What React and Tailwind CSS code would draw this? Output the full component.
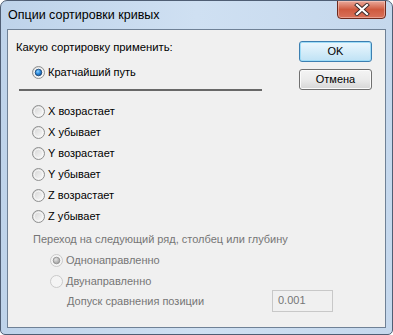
import React from "react";

const Radio = ({ checked, disabled }) => {
  const ring = disabled ? "#c9c9c9" : "#8e8f8f";
  return (
    <svg width="13" height="13" viewBox="0 0 13 13" className="shrink-0">
      <defs>
        <linearGradient id="rb" x1="0" y1="0" x2="1" y2="1">
          <stop offset="0" stopColor="#d0d0d0" />
          <stop offset="1" stopColor="#ffffff" />
        </linearGradient>
        <radialGradient id="dotBlue" cx="0.4" cy="0.35" r="0.7">
          <stop offset="0" stopColor="#8fd2ff" />
          <stop offset="0.5" stopColor="#2c8ce0" />
          <stop offset="1" stopColor="#1b4f8f" />
        </radialGradient>
        <radialGradient id="dotGray" cx="0.4" cy="0.35" r="0.7">
          <stop offset="0" stopColor="#e4e4e4" />
          <stop offset="1" stopColor="#9a9a9a" />
        </radialGradient>
      </defs>
      <circle cx="6.5" cy="6.5" r="6" fill={disabled ? "#f4f4f4" : "url(#rb)"} stroke={ring} strokeWidth="1" />
      {!disabled && <circle cx="6.5" cy="6.5" r="4.3" fill="none" stroke="#f8f8f8" strokeWidth="1" />}
      {checked && (
        <circle
          cx="6.5"
          cy="6.5"
          r="3.3"
          fill={disabled ? "url(#dotGray)" : "url(#dotBlue)"}
          stroke={disabled ? "#8c8c8c" : "#16416f"}
          strokeWidth="0.8"
        />
      )}
    </svg>
  );
};

const Option = ({ label, checked, disabled, className = "" }) => (
  <div className={`h-[21px] flex items-center gap-[3px] ${className}`}>
    <Radio checked={checked} disabled={disabled} />
    <span className={disabled ? "text-[#767676]" : "text-black"}>{label}</span>
  </div>
);

const sorts = ["X возрастает", "X убывает", "Y возрастает", "Y убывает", "Z возрастает", "Z убывает"];

export default function App() {
  return (
    <div
      className="w-[393px] h-[335px] flex flex-col border border-[#4f5e74] rounded-t-[7px] rounded-b-[5px] bg-gradient-to-r from-[#bed3ea] via-[#cfe0f2] to-[#c5d8ed] overflow-hidden"
      style={{ fontFamily: '"Liberation Sans", Arial, sans-serif' }}
    >
      <div className="h-[28px] flex items-start shrink-0">
        <div className="pl-[7px] pt-[7px] text-[12.5px] leading-[15px] text-black flex-1">Опции сортировки кривых</div>
        <div className="mr-[6px] w-[49px] h-[19px] -mt-px rounded-b-[4px] border border-[#6d2a1e] bg-gradient-to-b from-[#e9a99b] via-[#cf5a3f] to-[#d8715a] flex items-center justify-center shadow-[inset_0_0_0_1px_rgba(255,220,210,0.45)]">
          <svg width="16" height="13" viewBox="0 0 16 13">
            <path d="M3 2 L13 11 M13 2 L3 11" stroke="#3b2a2a" strokeWidth="4" strokeLinecap="square" />
            <path d="M3 2 L13 11 M13 2 L3 11" stroke="#ffffff" strokeWidth="2.2" strokeLinecap="square" />
          </svg>
        </div>
      </div>
      <div className="mx-[6px] mb-[6px] flex-1 border border-[#6f8196] bg-[#f0f0f0] flex text-[11px] leading-[13px]">
        <div className="flex-1 min-w-0 pl-[8px] pt-[7px] flex flex-col">
          <div className="h-[20px] flex items-center text-[11.3px]">Какую сортировку применить:</div>
          <Option label="Кратчайший путь" checked className="mt-[5px] ml-[16px] !h-[20px]" />
          <div className="mt-[7px] ml-[3px] w-[243px] h-[2px] bg-[#686868]" />
          <div className="mt-[10px] ml-[16px] flex flex-col">
            {sorts.map((s) => (
              <Option key={s} label={s} />
            ))}
          </div>
          <div className="mt-[2px] ml-[17px] h-[21px] flex items-center text-[#767676]">
            Переход на следующий ряд, столбец или глубину
          </div>
          <div className="ml-[34px] flex flex-col">
            <Option label="Однонаправленно" checked disabled />
            <Option label="Двунаправленно" disabled />
          </div>
          <div className="-mt-[2px] ml-[51px] h-[22px] flex items-center">
            <span className="w-[205px] shrink-0 text-[#767676]">Допуск сравнения позиции</span>
            <div className="w-[61px] h-[22px] shrink-0 border border-[#c8c8c8] bg-[#f0f0f0] pl-[5px] pt-[3px] text-[#767676]">0.001</div>
          </div>
        </div>
        <div className="w-[73px] shrink-0 mr-[13px] mt-[11px] flex flex-col gap-[7px]">
          <div className="h-[21px] rounded-[3px] border border-[#3c7fb1] bg-gradient-to-b from-[#ecf7fd] to-[#bfe2f5] flex items-center justify-center shadow-[inset_0_0_0_1px_#9fdcf7]">
            OK
          </div>
          <div className="h-[21px] rounded-[3px] border border-[#707070] bg-gradient-to-b from-[#f4f4f4] via-[#ebebeb] to-[#d6d6d6] flex items-center justify-center shadow-[inset_0_0_0_1px_#fbfbfb]">
            Отмена
          </div>
        </div>
      </div>
    </div>
  );
}
